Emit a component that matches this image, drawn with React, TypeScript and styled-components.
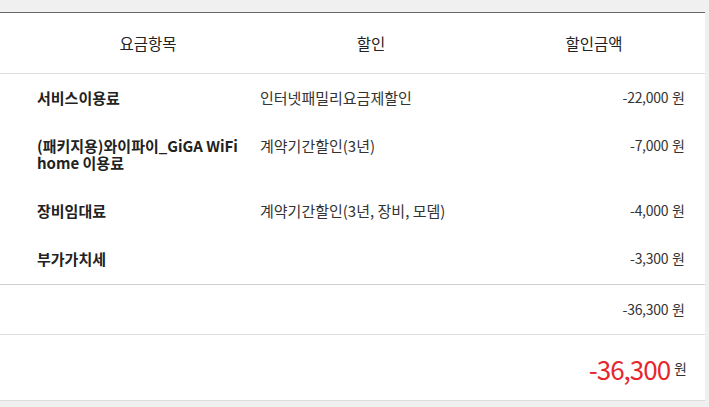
import React from 'react';
import styled, {createGlobalStyle} from 'styled-components';

const GlobalStyle = createGlobalStyle`
  html, body {
    margin: 0;
    padding: 0;
    background: #f0f0f0;
  }
  body {
    font-family: 'Noto Sans CJK KR', 'Noto Sans', sans-serif;
    color: #333;
  }
`;

interface IRow {
  item: string;
  discount?: string;
  amount: string;
}

const rows: IRow[] = [
  {item: '서비스이용료', discount: '인터넷패밀리요금제할인', amount: '-22,000'},
  {
    item: '(패키지용)와이파이_GiGA WiFi home 이용료',
    discount: '계약기간할인(3년)',
    amount: '-7,000'
  },
  {item: '장비임대료', discount: '계약기간할인(3년, 장비, 모뎀)', amount: '-4,000'},
  {item: '부가가치세', amount: '-3,300'}
];

const App: React.FC = () => {
  return (
    <>
      <GlobalStyle />
      <StyledPage>
        <StyledPanel>
          <StyledHead>
            <StyledHeadCell>요금항목</StyledHeadCell>
            <StyledHeadCell>할인</StyledHeadCell>
            <StyledHeadCell>할인금액</StyledHeadCell>
          </StyledHead>
          <StyledBody>
            {rows.map((row, i) => (
              <StyledRow key={i} first={i === 0} last={i === rows.length - 1}>
                <StyledItem>{row.item}</StyledItem>
                <StyledDiscount>{row.discount}</StyledDiscount>
                <StyledAmount>
                  {row.amount}
                  <StyledWon>원</StyledWon>
                </StyledAmount>
              </StyledRow>
            ))}
          </StyledBody>
          <StyledSubtotal>
            <StyledAmount>
              -36,300
              <StyledWon>원</StyledWon>
            </StyledAmount>
          </StyledSubtotal>
          <StyledTotal>
            <StyledTotalValue>-36,300</StyledTotalValue>
            <StyledWon>원</StyledWon>
          </StyledTotal>
        </StyledPanel>
      </StyledPage>
    </>
  );
};

export default App;

const StyledPage = styled.div`
  padding-top: 12px;
  height: 407px;
  box-sizing: border-box;
`;
const StyledPanel = styled.div`
  width: 705px;
  background: #fff;
  border-top: 1px solid #666;
  border-bottom: 1px solid #dcdcdc;
`;
const StyledHead = styled.div`
  display: grid;
  grid-template-columns: 259px 224px 1fr;
  height: 60px;
  align-items: center;
  border-bottom: 1px solid #dcdcdc;
`;
const StyledHeadCell = styled.div`
  text-align: center;
  font-size: 15.5px;
  color: #222;
  &:first-child {
    padding-left: 37px;
  }
`;
const StyledBody = styled.div`
  border-bottom: 1px solid #d0d0d0;
`;
const StyledRow = styled.div<{first?: boolean; last?: boolean}>`
  display: grid;
  grid-template-columns: 259px 224px 1fr;
  align-items: start;
  padding: ${({first}) => (first ? '15px' : '16px')} 0
    ${({last}) => (last ? '17px' : '15px')};
  font-size: 15px;
  line-height: 17px;
`;
const StyledItem = styled.div`
  padding: 0 20px 0 37px;
  font-weight: bold;
  color: #222;
`;
const StyledDiscount = styled.div`
  padding-left: 1px;
  color: #333;
`;
const StyledAmount = styled.div`
  text-align: right;
  padding-right: 20px;
  font-size: 14px;
  letter-spacing: -0.3px;
  color: #333;
`;
const StyledWon = styled.span`
  margin-left: 4px;
  font-size: 14px;
  letter-spacing: 0;
  color: #333;
`;
const StyledSubtotal = styled.div`
  height: 49px;
  display: flex;
  align-items: center;
  justify-content: flex-end;
  border-bottom: 1px solid #dcdcdc;
  line-height: 17px;
`;
const StyledTotal = styled.div`
  height: 65px;
  display: flex;
  align-items: center;
  justify-content: flex-end;
  padding-right: 18px;
  line-height: 26px;
`;
const StyledTotalValue = styled.span`
  font-size: 26px;
  color: #e6262d;
  letter-spacing: -1px;
  padding-top: 2px;
`;
